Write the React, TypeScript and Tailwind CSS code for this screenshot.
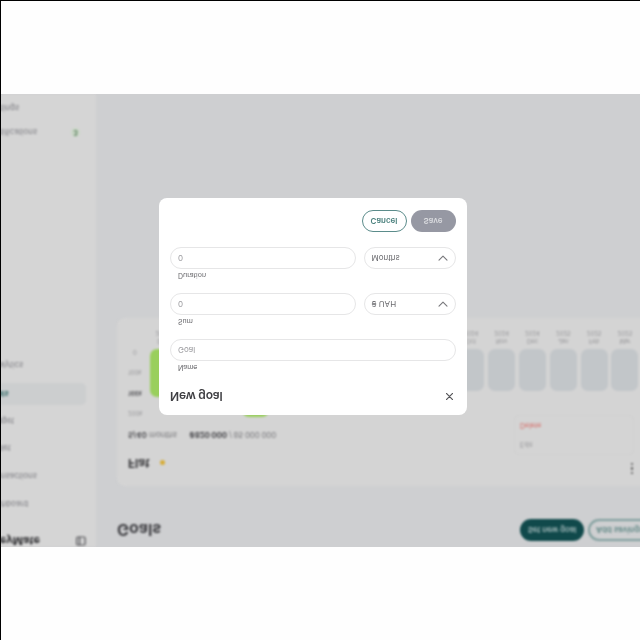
import React from 'react';

const nav = [
  { label: 'Dashboard', offset: '-ml-[13px]' },
  { label: 'Transactions', offset: '-ml-[11.5px]' },
  { label: 'Wallet', offset: '-ml-[12.5px]' },
  { label: 'Budget', offset: '-ml-[13px]' },
];

const months = [
  ['Dec', '2023'], ['Jan', '2024'], ['Feb', '2024'], ['Mar', '2024'], ['Apr', '2024'], ['May', '2024'],
  ['Jun', '2024'], ['Jul', '2024'], ['Aug', '2024'], ['Sep', '2024'], ['Oct', '2024'], ['Nov', '2024'],
  ['Dec', '2024'], ['Jan', '2025'], ['Feb', '2025'], ['Mar', '2025'],
];

const barHeights = [48, 42, 42, 68, 42, 42, 42, 42, 42, 42, 42, 42, 42, 42, 42, 42];

function Sidebar() {
  return (
    <aside className="flex h-full w-[96px] shrink-0 flex-col bg-[#d5d5d5] text-[8px] leading-[12px] text-[#808086]">
      <div className="flex h-[12px] items-center justify-between pr-[10px]">
        <span className="-ml-[24px] text-[11px] font-bold text-[#303033]">MoneyMate</span>
        <svg className="h-[10px] w-[10px]" viewBox="0 0 10 10" fill="none" stroke="#505054" strokeWidth="1.2">
          <rect x="0.7" y="1" width="8.4" height="8" rx="1.2" />
          <path d="M3.6 1v8" />
        </svg>
      </div>
      <div className="flex flex-col gap-[15.8px] pt-[25px]">
        {nav.map((n) => (
          <div key={n.label} className={n.offset}>{n.label}</div>
        ))}
      </div>
      <div className="mt-[9.5px] mr-[10px] flex h-[22px] items-center rounded-r-[5px] bg-[#cccecf] font-semibold text-[#2b6561]">
        <span className="-ml-[13.5px]">Goals</span>
      </div>
      <div className="-ml-[11.5px] mt-[12px]">Analytics</div>
      <div className="mt-auto mb-[12px] flex items-center justify-between pr-[16px]">
        <span className="-ml-[10.5px]">Notifications</span>
        <span className="flex h-[9px] w-[9px] items-center justify-center rounded-full bg-[#cbd8c8] text-[7px] font-bold text-[#5d8060]">3</span>
      </div>
      <div className="-ml-[11.5px] mb-[8.5px]">Settings</div>
    </aside>
  );
}

function GoalCard() {
  return (
    <section className="relative mt-[33px] h-[168px] w-[560px] rounded-[8px] bg-[#d4d4d4]">
      <div className="flex h-[46px] items-center pl-[11px]">
        <span className="text-[12px] font-bold text-[#3b3b3e]">Flat</span>
        <span className="ml-[10px] h-[5px] w-[5px] rounded-full bg-[#d6ad38]" />
        <span className="-mt-[11px] ml-[466px] flex flex-col gap-[2px]">
          <i className="h-[2.4px] w-[2.4px] rounded-full bg-[#555]" />
          <i className="h-[2.4px] w-[2.4px] rounded-full bg-[#555]" />
          <i className="h-[2.4px] w-[2.4px] rounded-full bg-[#555]" />
        </span>
      </div>
      <div className="-mt-[1px] flex h-[12px] items-center pl-[11px] text-[8px] text-[#77777b]">
        <span className="w-[61px]"><b className="font-semibold text-[#454549]">5/40</b> months</span>
        <span className="tracking-[-0.22px]"><b className="font-bold text-[#454549]">₴820 000</b> / 85 000 000</span>
      </div>
      <div className="mt-[11px] flex pl-[11px]">
        <div className="flex w-[14px] flex-col gap-[10.3px] text-center text-[6px] leading-[10px] text-[#98989b]">
          <span>200k</span>
          <span className="font-bold text-[#606064]">166k</span>
          <span>100k</span>
          <span>0</span>
        </div>
        <div className="ml-[7.5px] flex gap-[3.8px]">
          {months.map(([m, y], i) => (
            <div key={i} className="flex w-[27px] shrink-0 flex-col items-center">
              <div className="flex h-[69px] w-full items-end">
                <div
                  className={`w-full rounded-[7px] ${i < 5 ? 'bg-[#99cf5d]' : 'bg-[#c2c6c9]'}`}
                  style={{ height: barHeights[i] }}
                />
              </div>
              <span className="mt-[4px] text-[6px] leading-[8px] text-[#98989b]">{m}</span>
              <span className="text-[6px] leading-[8px] text-[#98989b]">{y}</span>
            </div>
          ))}
        </div>
      </div>
      <div className="absolute top-[31px] left-[397px] flex h-[40px] w-[120px] flex-col justify-between rounded-[5px] border border-[#d0d0d0] px-[5px] py-[4px] text-[7px] leading-[11px]">
        <span className="text-[#98989b]">Edit</span>
        <span className="text-[#d66a65]">Delete</span>
      </div>
    </section>
  );
}

function Field({ label, placeholder, unit }: { label: string; placeholder: string; unit?: string }) {
  return (
    <div className="h-[46px]">
      <div className="h-[12px] pl-[8px] text-[7px] leading-[11px] text-[#66666a]">{label}</div>
      <div className="flex gap-[8px]">
        <div className="flex h-[22px] flex-1 items-center rounded-full border border-[#e6e6e7] px-[7px] text-[8px] text-[#99999d]">{placeholder}</div>
        {unit && (
          <div className="flex h-[22px] w-[92px] items-center justify-between rounded-full border border-[#e6e6e7] px-[7px] text-[8px] text-[#6a6a6e]">
            <span>{unit}</span>
            <svg className="h-[6px] w-[10px]" viewBox="0 0 10 6" fill="none" stroke="#77777b" strokeWidth="1.1" strokeLinecap="round" strokeLinejoin="round">
              <path d="M1 0.8l4 4 4-4" />
            </svg>
          </div>
        )}
      </div>
    </div>
  );
}

function Modal() {
  return (
    <div className="absolute top-[132px] left-[158.5px] h-[217px] w-[308.5px] rounded-[8px] bg-white px-[11.5px]">
      <div className="flex h-[41.5px] items-center justify-between pr-[3px]">
        <h2 className="-mt-[3px] text-[12px] font-semibold tracking-[-0.2px] text-[#3f3f43]">New goal</h2>
        <svg className="-mt-[5px] h-[7px] w-[7px]" viewBox="0 0 7 7" stroke="#555559" strokeWidth="1.2" strokeLinecap="round">
          <path d="M0.4 0.4l6.2 6.2M6.6 0.4L0.4 6.6" />
        </svg>
      </div>
      <Field label="Name" placeholder="Goal" />
      <Field label="Sum" placeholder="0" unit="₴ UAH" />
      <Field label="Duration" placeholder="0" unit="Months" />
      <div className="mt-[3.5px] flex justify-end gap-[4px] text-[8px] font-semibold">
        <button className="h-[22px] w-[45px] rounded-full border-[1.5px] border-[#5b8c8b] text-[#4a807d]">Cancel</button>
        <button className="h-[22px] w-[45px] rounded-full bg-[#9698a3] text-[#d9dade]">Save</button>
      </div>
    </div>
  );
}

export default function App() {
  return (
    <div className="h-[640px] w-[640px] overflow-hidden border-t border-l border-black bg-[#fefefe] pt-[93px] font-['Inter','Liberation_Sans',sans-serif]">
      <div className="relative h-[453px] w-[639px] -scale-y-100 overflow-hidden bg-[#cecfd1]">
        <div className="-ml-px flex h-full blur-[0.8px]">
          <Sidebar />
          <main className="w-[544px] shrink-0 pl-[21px]">
            <div className="flex h-[28px] items-end">
              <h1 className="w-[403px] shrink-0 text-[16px] leading-[21px] font-bold tracking-[-0.1px] text-[#424246]">Goals</h1>
              <button className="h-[22px] w-[64px] shrink-0 rounded-full bg-[#10494b] text-[8px] font-semibold tracking-[-0.1px] text-[#a2b8b9]">Set new goal</button>
              <button className="ml-[4px] h-[22px] w-[64px] shrink-0 rounded-full border-2 border-[#7f9e9d] pl-[6px] text-left text-[8px] font-semibold whitespace-nowrap text-[#5f8785]">Add savings</button>
            </div>
            <GoalCard />
          </main>
        </div>
        <div className="absolute inset-0 -left-px">
          <Modal />
        </div>
      </div>
    </div>
  );
}
